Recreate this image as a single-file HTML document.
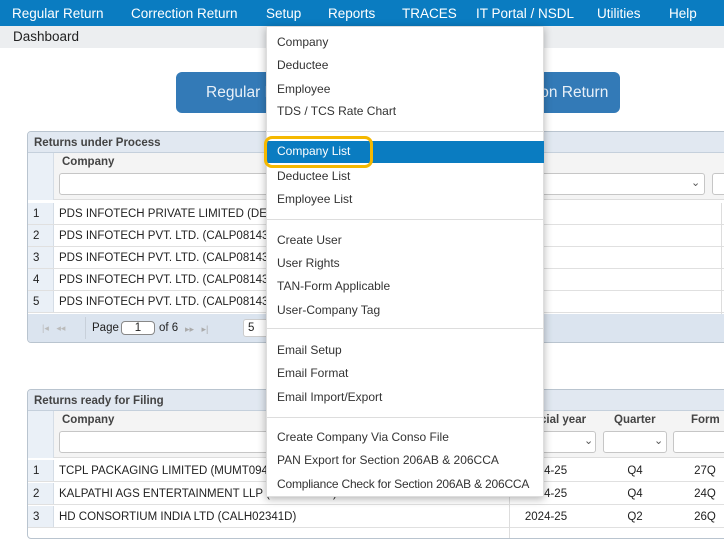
<!DOCTYPE html>
<html><head><meta charset="utf-8"><style>
*{box-sizing:border-box;margin:0;padding:0}
body{width:724px;height:534px;overflow:hidden;background:#fff;font-family:"Liberation Sans",Arial,sans-serif;position:relative;white-space:nowrap}
.a{position:absolute}
.nav{left:0;top:0;width:724px;height:26px;background:#0a7cc1;color:#fff;font-size:13.5px}
.nav span{position:absolute;top:6px}
.bc{left:0;top:26px;width:724px;height:22px;background:#eceef0;font-size:13.5px;color:#222}
.btn{background:#337ab7;border-radius:6px;color:#e8f0f8;font-size:15.5px;height:41px;top:72px;text-align:center;line-height:41px}
.grid{border:1px solid #b9c4cf;border-radius:4px;left:27px;width:720px;font-size:11.5px;color:#222;overflow:hidden}
.gh{height:21px;background:#e1e8f1;font-weight:bold;color:#444;padding:5px 6px;border-bottom:1px solid #c5d0dc}
.row{position:absolute;left:0;width:720px;height:22px;border-bottom:1px solid #e0e0e0}
.num{position:absolute;left:0;top:0;width:26px;height:100%;background:#eaf0f7;border-right:1px solid #d5dde6;padding:5px 5px}
.txt{position:absolute;left:31px;top:5px}
.inp{position:absolute;border:1px solid #c6c6c6;border-radius:3px;background:#fff;height:22px}
.menu{left:266px;top:26px;width:278px;height:471px;background:#fff;box-shadow:0 2px 8px rgba(0,0,0,.3);border:1px solid #ddd;font-size:12px;color:#333}
.menu div{position:absolute;left:10px}
.sep{left:0!important;width:276px;height:1px;background:#ddd}
.c{text-align:center;width:60px}
</style></head><body>
<div class="a nav">
<span style="left:12px">Regular Return</span><span style="left:131px">Correction Return</span><span style="left:266px">Setup</span><span style="left:328px">Reports</span><span style="left:402px">TRACES</span><span style="left:476px">IT Portal / NSDL</span><span style="left:597px">Utilities</span><span style="left:669px">Help</span>
</div>
<div class="a bc"><span style="position:absolute;left:13px;top:3px">Dashboard</span></div>
<div class="a btn" style="left:176px;width:134px;text-align:left;padding-left:30px">Regular Return</div>
<div class="a btn" style="left:476px;width:144px;text-align:left;padding-left:10px">Correction Return</div>

<div class="a grid" style="top:131px;height:212px">
<div class="gh">Returns under Process</div>
<div class="a" style="left:0;top:21px;width:26px;height:47px;background:#eaf0f7;border-right:1px solid #d5dde6"></div>
<div class="a" style="left:26px;top:21px;width:700px;height:47px;background:#f4f4f4;border-bottom:1px solid #ddd"></div>
<div class="a" style="left:34px;top:24px;font-weight:bold;color:#444">Company</div>
<div class="inp" style="left:31px;top:41px;width:646px"></div>
<div class="a" style="left:663px;top:44px;color:#555;font-size:11px">&#8964;</div>
<div class="inp" style="left:684px;top:41px;width:40px"></div>
<div class="row" style="top:71px"><div class="num">1</div><div class="txt">PDS INFOTECH PRIVATE LIMITED (DELS</div></div>
<div class="row" style="top:93px"><div class="num">2</div><div class="txt">PDS INFOTECH PVT. LTD. (CALP08143C)</div></div>
<div class="row" style="top:115px"><div class="num">3</div><div class="txt">PDS INFOTECH PVT. LTD. (CALP08143C)</div></div>
<div class="row" style="top:137px"><div class="num">4</div><div class="txt">PDS INFOTECH PVT. LTD. (CALP08143C)</div></div>
<div class="row" style="top:159px"><div class="num">5</div><div class="txt">PDS INFOTECH PVT. LTD. (CALP08143C)</div></div>
<div class="a" style="left:693px;top:71px;width:1px;height:111px;background:#ddd"></div>
<div class="a" style="left:0;top:182px;width:720px;height:30px;background:#dbe4ef">
<span class="a" style="left:14px;top:9px;color:#bbb;font-size:9px">|◂ &nbsp; ◂◂</span>
<span class="a" style="left:57px;top:3px;width:1px;height:22px;background:#c8d0da"></span>
<span class="a" style="left:64px;top:8px">Page</span>
<span class="a" style="left:93px;top:7px;width:34px;height:14px;border:1px solid #888;border-radius:4px;background:#fff;text-align:center;line-height:12px">1</span>
<span class="a" style="left:131px;top:8px">of 6</span>
<span class="a" style="left:157px;top:10px;color:#aaa;font-size:9px">▸▸ &nbsp; ▸|</span>
<span class="a" style="left:215px;top:5px;width:30px;height:18px;border:1px solid #ccc;border-radius:3px;background:#fff;padding:2px 4px">5</span>
</div>
</div>

<div class="a grid" style="top:389px;height:150px">
<div class="gh">Returns ready for Filing</div>
<div class="a" style="left:0;top:21px;width:26px;height:47px;background:#eaf0f7;border-right:1px solid #d5dde6"></div>
<div class="a" style="left:26px;top:21px;width:700px;height:47px;background:#f4f4f4;border-bottom:1px solid #ddd"></div>
<div class="a" style="left:34px;top:24px;font-weight:bold;color:#444">Company</div>
<div class="a" style="left:505px;top:24px;font-weight:bold;color:#444">ncial year</div>
<div class="a" style="left:586px;top:24px;font-weight:bold;color:#444">Quarter</div>
<div class="a" style="left:663px;top:24px;font-weight:bold;color:#444">Form</div>
<div class="inp" style="left:31px;top:41px;width:537px"></div>
<div class="a" style="left:556px;top:44px;color:#555;font-size:11px">&#8964;</div>
<div class="inp" style="left:575px;top:41px;width:64px"></div>
<div class="a" style="left:626px;top:44px;color:#555;font-size:11px">&#8964;</div>
<div class="inp" style="left:645px;top:41px;width:60px"></div>
<div class="row" style="top:70px"><div class="num">1</div><div class="txt">TCPL PACKAGING LIMITED (MUMT09495</div><span class="a c" style="left:488px;top:5px">2024-25</span><span class="a c" style="left:577px;top:5px">Q4</span><span class="a c" style="left:647px;top:5px">27Q</span></div>
<div class="row" style="top:93px"><div class="num">2</div><div class="txt">KALPATHI AGS ENTERTAINMENT LLP (CHEK11223)</div><span class="a c" style="left:488px;top:5px">2024-25</span><span class="a c" style="left:577px;top:5px">Q4</span><span class="a c" style="left:647px;top:5px">24Q</span></div>
<div class="row" style="top:116px"><div class="num">3</div><div class="txt">HD CONSORTIUM INDIA LTD (CALH02341D)</div><span class="a c" style="left:488px;top:5px">2024-25</span><span class="a c" style="left:577px;top:5px">Q2</span><span class="a c" style="left:647px;top:5px">26Q</span></div>
<div class="a" style="left:481px;top:70px;width:1px;height:80px;background:#ddd"></div>
</div>

<div class="a menu">
<div style="top:8px">Company</div>
<div style="top:31px">Deductee</div>
<div style="top:55px">Employee</div>
<div style="top:77px">TDS / TCS Rate Chart</div>
<div class="sep" style="top:104px"></div>
<div style="left:0;top:114px;width:277px;height:22px;background:#0a7cc1"></div>
<div style="top:117px;color:#fff">Company List</div>
<div style="top:142px">Deductee List</div>
<div style="top:165px">Employee List</div>
<div class="sep" style="top:192px"></div>
<div style="top:206px">Create User</div>
<div style="top:229px">User Rights</div>
<div style="top:252px">TAN-Form Applicable</div>
<div style="top:276px">User-Company Tag</div>
<div class="sep" style="top:301px"></div>
<div style="top:316px">Email Setup</div>
<div style="top:339px">Email Format</div>
<div style="top:363px">Email Import/Export</div>
<div class="sep" style="top:390px"></div>
<div style="top:403px">Create Company Via Conso File</div>
<div style="top:426px">PAN Export for Section 206AB &amp; 206CCA</div>
<div style="top:450px;letter-spacing:-0.2px">Compliance Check for Section 206AB &amp; 206CCA</div>
</div>
<div class="a" style="left:264px;top:136px;width:109px;height:32px;border:3px solid #f5b800;border-radius:8px"></div>
</body></html>
